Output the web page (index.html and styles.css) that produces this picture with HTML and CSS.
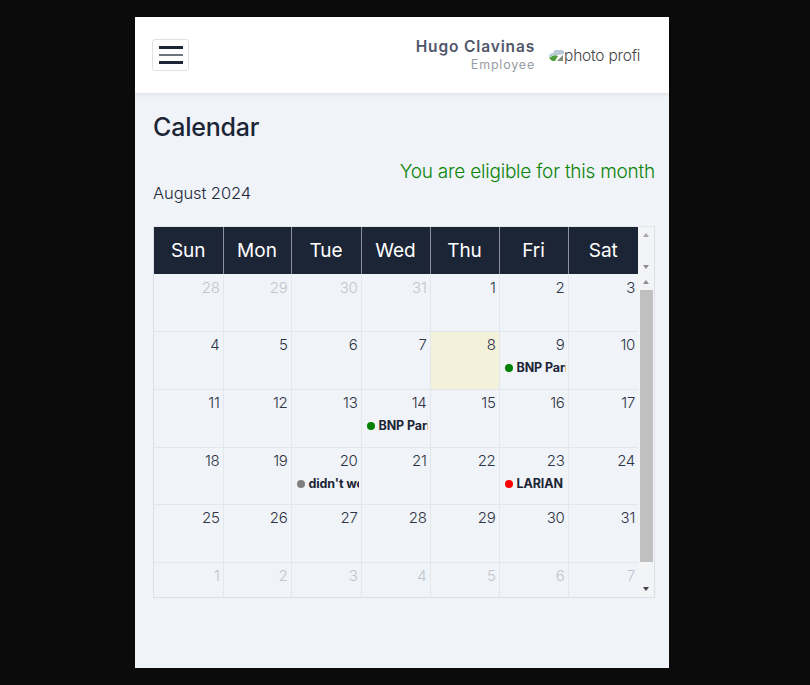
FILE: index.html
```html
<!DOCTYPE html>
<html lang="en">
<head>
  <meta charset="UTF-8" />
  <meta name="viewport" content="width=device-width, initial-scale=1.0"/>
  <title>Calendar</title>
  <link rel="stylesheet" href="styles.css">
</head>
<body>
  <div class="app">
    <header class="topbar">
      <button class="menu-btn" aria-label="Menu"><span></span><span></span><span></span></button>
      <div class="user">
        <div class="user-text">
          <div class="user-name">Hugo Clavinas</div>
          <div class="user-role">Employee</div>
        </div>
        <div class="avatar">
          <svg class="broken" width="15" height="15" viewBox="0 0 15 15">
            <path d="M0 8 Q1 5 4 5 L6 2 H13 L15 3 V6 L9 7 Q4 7 0 9 Z" fill="#b9c9d8"/>
            <path d="M0 10 Q5 6 9 8 L6 13 H3 Z" fill="#4f9e3f"/>
            <path d="M8 13 L14 7 V13 Z" fill="#7f8f7f"/>
          </svg>
          <span class="avatar-alt">photo profile</span>
        </div>
      </div>
    </header>

    <main class="content">
      <h1>Calendar</h1>
      <p class="eligible">You are eligible for this month</p>
      <p class="month">August 2024</p>

      <div class="calendar">
        <div class="cal-head">
          <div class="head-row">
            <div class="head-cell">Sun</div>
            <div class="head-cell">Mon</div>
            <div class="head-cell">Tue</div>
            <div class="head-cell">Wed</div>
            <div class="head-cell">Thu</div>
            <div class="head-cell">Fri</div>
            <div class="head-cell">Sat</div>
          </div>
          <div class="scrollbar head-scroll">
            <i class="arrow up pale"></i>
            <i class="arrow down pale"></i>
          </div>
        </div>
        <div class="cal-main">
          <div class="grid" id="grid"></div>
          <div class="scrollbar">
            <i class="arrow up"></i>
            <div class="thumb"></div>
            <i class="arrow down dark"></i>
          </div>
        </div>
      </div>
    </main>
  </div>

  <script>
    const grid = document.getElementById('grid');
    const events = {
      9: ['BNP Paribas', 'green'],
      14: ['BNP Paribas', 'green'],
      20: ["didn't work", 'grey'],
      23: ['LARIAN Studios', 'red']
    };
    const days = [];
    [28, 29, 30, 31].forEach(d => days.push({ d, other: true }));
    for (let d = 1; d <= 31; d++) days.push({ d });
    for (let d = 1; d <= 7; d++) days.push({ d, other: true });

    days.forEach(item => {
      const cell = document.createElement('div');
      cell.className = 'day';
      if (item.other) cell.classList.add('other');
      if (item.d === 8 && !item.other) cell.classList.add('today');
      let html = `<div class="num">${item.d}</div>`;
      const ev = !item.other && events[item.d];
      if (ev) {
        html += `<div class="event"><span class="dot ${ev[1]}"></span><span class="event-name">${ev[0]}</span></div>`;
      }
      cell.innerHTML = html;
      grid.appendChild(cell);
    });
  </script>
</body>
</html>
```

FILE: styles.css
```css
* { margin: 0; padding: 0; box-sizing: border-box; }
body {
  font-family: 'Inter', 'Liberation Sans', sans-serif;
  background: #0b0b0b;
  color: #1c2536;
  padding: 17px 6px 0 0;
}

.app {
  width: 534px;
  height: 651px;
  margin: 0 auto;
  background: #f0f3f8;
  display: flex;
  flex-direction: column;
}

.topbar {
  height: 76px;
  background: #fff;
  padding: 0 29px 0 17px;
  display: flex;
  align-items: center;
  justify-content: space-between;
  box-shadow: 0 1px 4px rgba(0,0,0,0.1);
}

.menu-btn {
  width: 37px;
  height: 32px;
  background: #fff;
  border: 1px solid #dfe1e4;
  border-radius: 3px;
  display: flex;
  flex-direction: column;
  justify-content: center;
  align-items: center;
  gap: 5px;
}

.menu-btn span {
  width: 24px;
  height: 2.5px;
  background: #1c2536;
}

.menu-btn span:nth-child(2) { background: #6d7480; }

.user {
  display: flex;
  align-items: center;
  gap: 14px;
}

.user-text { text-align: right; }

.user-name {
  font-size: 15.5px;
  font-weight: 600;
  letter-spacing: 0.85px;
  color: #50566a;
  line-height: 20px;
}

.user-role {
  font-size: 12.5px;
  font-weight: 400;
  letter-spacing: 0.8px;
  color: #989ca6;
  line-height: 16px;
}

.avatar {
  width: 91px;
  display: flex;
  align-items: center;
  overflow: hidden;
  white-space: nowrap;
}

.broken { flex: none; }

.avatar-alt {
  font-size: 15.5px;
  font-weight: 300;
  color: #444;
  letter-spacing: -0.2px;
}

.content { padding: 20px 14px 0 18px; }

h1 {
  font-size: 25px;
  font-weight: 500;
  line-height: 28px;
  color: #1c2536;
  letter-spacing: -0.2px;
}

.eligible {
  margin-top: 19px;
  text-align: right;
  font-size: 19px;
  font-weight: 300;
  line-height: 24px;
  color: #0a840a;
  letter-spacing: -0.22px;
}

.month {
  margin-top: -1px;
  font-size: 16.5px;
  font-weight: 300;
  line-height: 20px;
  color: #22283a;
  letter-spacing: -0.1px;
}

.calendar {
  margin-top: 23px;
  width: 502px;
  height: 372px;
  border: 1px solid #dcdfe4;
  border-top-color: #e4e6ea;
  display: flex;
  flex-direction: column;
}

.cal-head { display: flex; height: 47px; }

.head-row {
  width: 484px;
  display: grid;
  grid-template-columns: 69.5px 68px 70px 69px 69px 69px 69.5px;
  background: #1c2536;
}

.head-cell {
  color: #fff;
  font-size: 19px;
  font-weight: 400;
  display: flex;
  align-items: center;
  justify-content: center;
  border-right: 1px solid #8b909a;
}

.head-cell:last-child { border-right: none; }

.scrollbar {
  width: 16px;
  flex: none;
  background: #f3f4f6;
  display: flex;
  flex-direction: column;
  align-items: center;
  padding: 5px 0 6px;
}

.head-scroll { justify-content: space-between; padding: 6px 0 5px; }

.arrow {
  display: block;
  width: 0;
  height: 0;
  border-left: 3.5px solid transparent;
  border-right: 3.5px solid transparent;
}

.arrow.up { border-bottom: 4px solid #8e8e8e; }
.arrow.down { border-top: 4px solid #8e8e8e; }
.arrow.up.pale { border-bottom-color: #a6a6a6; }
.arrow.down.pale { border-top-color: #8e8e8e; }
.arrow.down.dark { border-top-color: #444; }

.thumb {
  width: 13px;
  height: 272px;
  background: #c0c0c0;
  margin: 6px 0 auto;
}

.cal-main {
  display: flex;
  flex: 1;
  min-height: 0;
  padding-top: 1px;
}

.grid {
  width: 484px;
  display: grid;
  grid-template-columns: 69.5px 68px 70px 69px 69px 69px 69.5px;
  grid-template-rows: 57px 58px 58px 57px 58px 58px;
  overflow: hidden;
}

.day {
  border-right: 1px solid #e3e6ea;
  border-bottom: 1px solid #e3e6ea;
  padding: 3px 3px 0 5px;
  min-width: 0;
}

.day:nth-child(7n) { border-right: none; }

.today { background: #f3f1da; }

.num {
  text-align: right;
  font-size: 15px;
  font-weight: 300;
  line-height: 20px;
  color: #2e3445;
  letter-spacing: -0.3px;
}

.other .num { color: #c2c6cc; }

.event {
  display: flex;
  align-items: center;
  gap: 4px;
  margin-top: 5px;
  margin-right: -1px;
  overflow: hidden;
  white-space: nowrap;
}

.dot {
  flex: none;
  width: 8px;
  height: 8px;
  border-radius: 50%;
}

.dot.green { background: #008000; }
.dot.grey { background: #808080; }
.dot.red { background: #ff0000; }

.event-name {
  font-size: 12.5px;
  font-weight: 700;
  line-height: 16px;
  color: #1c2536;
  letter-spacing: -0.1px;
}
```
